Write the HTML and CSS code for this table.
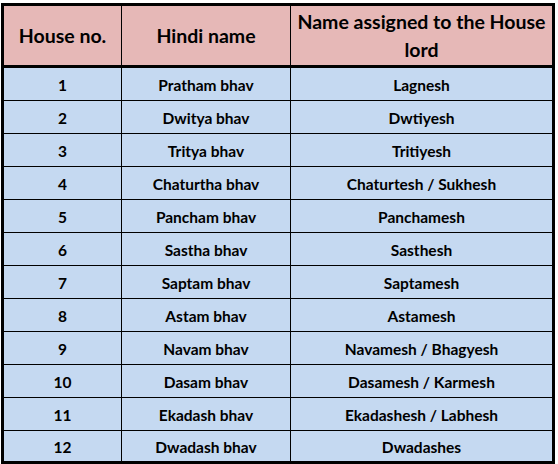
FILE: index.html
```html
<!DOCTYPE html>
<html>
<head>
<meta charset="utf-8">
<link rel="stylesheet" href="styles.css">
</head>
<body>
<table class="houses">
  <colgroup>
    <col class="c-no">
    <col class="c-hindi">
    <col class="c-lord">
  </colgroup>
  <thead>
    <tr>
      <th>House no.</th>
      <th>Hindi name</th>
      <th class="last">Name assigned to the House lord</th>
    </tr>
  </thead>
  <tbody>
    <tr><td>1</td><td>Pratham bhav</td><td class="last">Lagnesh</td></tr>
    <tr><td>2</td><td>Dwitya bhav</td><td class="last">Dwtiyesh</td></tr>
    <tr><td>3</td><td>Tritya bhav</td><td class="last">Tritiyesh</td></tr>
    <tr><td>4</td><td>Chaturtha bhav</td><td class="last">Chaturtesh / Sukhesh</td></tr>
    <tr><td>5</td><td>Pancham bhav</td><td class="last">Panchamesh</td></tr>
    <tr><td>6</td><td>Sastha bhav</td><td class="last">Sasthesh</td></tr>
    <tr><td>7</td><td>Saptam bhav</td><td class="last">Saptamesh</td></tr>
    <tr><td>8</td><td>Astam bhav</td><td class="last">Astamesh</td></tr>
    <tr><td>9</td><td>Navam bhav</td><td class="last">Navamesh / Bhagyesh</td></tr>
    <tr><td>10</td><td>Dasam bhav</td><td class="last">Dasamesh / Karmesh</td></tr>
    <tr><td>11</td><td>Ekadash bhav</td><td class="last">Ekadashesh / Labhesh</td></tr>
    <tr class="final"><td>12</td><td>Dwadash bhav</td><td class="last">Dwadashes</td></tr>
  </tbody>
</table>
</body>
</html>
```
FILE: styles.css
```css
html, body {
  margin: 0;
  padding: 0;
  background: #ffffff;
}

.houses {
  box-sizing: border-box;
  width: 554px;
  margin: 3px 0 0 1px;
  border: 3px solid #000;
  border-collapse: separate;
  border-spacing: 0;
  table-layout: fixed;
  font-family: Lato, "Open Sans", sans-serif;
  font-weight: 700;
  color: #000;
}

.c-no { width: 118px; }
.c-hindi { width: 169px; }
.c-lord { width: 261px; }

.houses th,
.houses td {
  box-sizing: border-box;
  padding: 0 4px;
  text-align: center;
  vertical-align: middle;
  border-right: 1px solid #000;
}

.houses th.last,
.houses td.last {
  border-right: none;
}

.houses th {
  height: 62px;
  background: #e6b8b7;
  border-bottom: 3px solid #000;
  font-size: 19.5px;
  line-height: 28px;
  font-weight: 700;
}

.houses td {
  height: 33px;
  background: #c5d9f1;
  border-bottom: 1px solid #000;
  font-size: 15.5px;
  line-height: 18px;
  padding-top: 2px;
}

.houses tr.final td {
  height: 30px;
  border-bottom: none;
}
```
